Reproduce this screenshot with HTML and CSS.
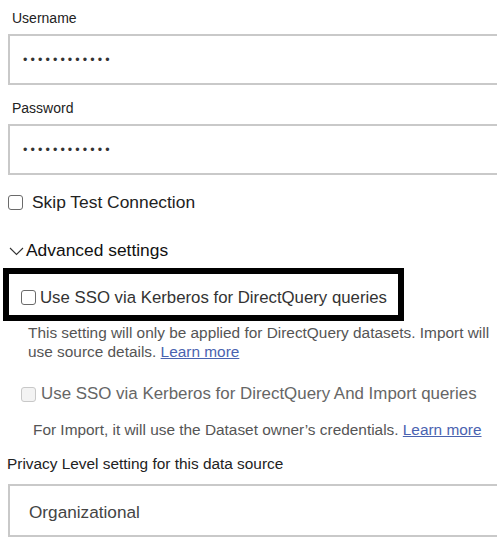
FILE: index.html
```html
<!DOCTYPE html>
<html>
<head>
<meta charset="utf-8">
<link rel="stylesheet" href="styles.css">
</head>
<body>
<div class="form">
  <div class="label first">Username</div>
  <div class="field"><span class="dots">••••••••••••</span></div>
  <div class="label">Password</div>
  <div class="field"><span class="dots">••••••••••••</span></div>
  <label class="check skip"><span class="box"></span><span>Skip Test Connection</span></label>
  <div class="adv"><svg class="chev" width="15" height="10" viewBox="0 0 15 10"><path d="M1 2 L7.5 8.5 L14 2" fill="none" stroke="#333" stroke-width="1.1"/></svg><span>Advanced settings</span></div>
  <div class="highlight">
    <label class="check sso"><span class="box"></span><span>Use SSO via Kerberos for DirectQuery queries</span></label>
  </div>
  <p class="desc">This setting will only be applied for DirectQuery datasets. Import will use source details. <a href="#">Learn more</a></p>
  <label class="check sso2"><span class="box disabled"></span><span>Use SSO via Kerberos for DirectQuery And Import queries</span></label>
  <p class="desc2">For Import, it will use the Dataset owner’s credentials. <a href="#">Learn more</a></p>
  <div class="label privacy">Privacy Level setting for this data source</div>
  <div class="field select"><span>Organizational</span></div>
</div>
</body>
</html>
```
FILE: styles.css
```css
html, body {
  margin: 0;
  padding: 0;
  background: #fff;
  overflow: hidden;
}
body {
  font-family: "Liberation Sans", Arial, sans-serif;
  color: #222;
  width: 497px;
  height: 539px;
}
.form {
  display: flex;
  flex-direction: column;
  align-items: flex-start;
}
.label {
  font-size: 14px;
  line-height: 16px;
  margin-left: 12px;
  color: #222;
}
.label.first { margin-top: 10px; }
.field {
  box-sizing: border-box;
  margin-top: 8px;
  margin-left: 8px;
  width: 489px;
  height: 51px;
  border: 2px solid #c9c9c9;
  border-right: none;
  display: flex;
  align-items: center;
  padding-left: 13px;
}
.field + .label { margin-top: 15px; }
.dots {
  font-size: 12.5px;
  letter-spacing: 3.1px;
  color: #333;
}
.check {
  display: flex;
  align-items: center;
}
.box {
  box-sizing: border-box;
  width: 15px;
  height: 15px;
  border: 1px solid #6a6a6a;
  border-radius: 3px;
  background: #fff;
  flex: none;
}
.box.disabled {
  border-color: #c8c8c8;
  background: #f3f3f3;
}
.skip {
  margin-top: 17px;
  margin-left: 8px;
  font-size: 17.4px;
  line-height: 20px;
}
.skip .box { margin-right: 9px; }
.adv {
  margin-top: 28px;
  margin-left: 9px;
  display: flex;
  align-items: center;
  font-size: 17.4px;
  line-height: 20px;
  color: #111;
}
.chev { margin-right: 2px; margin-top: 1px; }
.highlight {
  box-sizing: border-box;
  margin-top: 8px;
  margin-left: 3px;
  width: 401px;
  height: 53px;
  border: 6px solid #000;
  display: flex;
  align-items: center;
  padding-left: 12px;
  padding-top: 6px;
}
.sso {
  font-size: 16.8px;
  line-height: 18px;
  color: #333;
}
.sso .box { margin-right: 4px; }
.desc, .desc2 {
  margin: 0;
  font-size: 15.4px;
  line-height: 18px;
  color: #555;
}
.desc {
  margin-top: 2px;
  margin-left: 28px;
  width: 462px;
  line-height: 19px;
}
a {
  color: #4a63b0;
  text-decoration: underline;
}
.sso2 {
  margin-top: 24px;
  margin-left: 21px;
  font-size: 16.9px;
  line-height: 18px;
  color: #666;
}
.sso2 .box { margin-right: 5px; }
.desc2 {
  margin-top: 18px;
  margin-left: 33px;
}
.label.privacy {
  margin-top: 17px;
  margin-left: 7px;
  font-size: 15.4px;
}
.select {
  margin-top: 12px;
  height: 53px;
  padding-left: 19px;
  padding-top: 4px;
  font-size: 17.2px;
  color: #444;
}
```
